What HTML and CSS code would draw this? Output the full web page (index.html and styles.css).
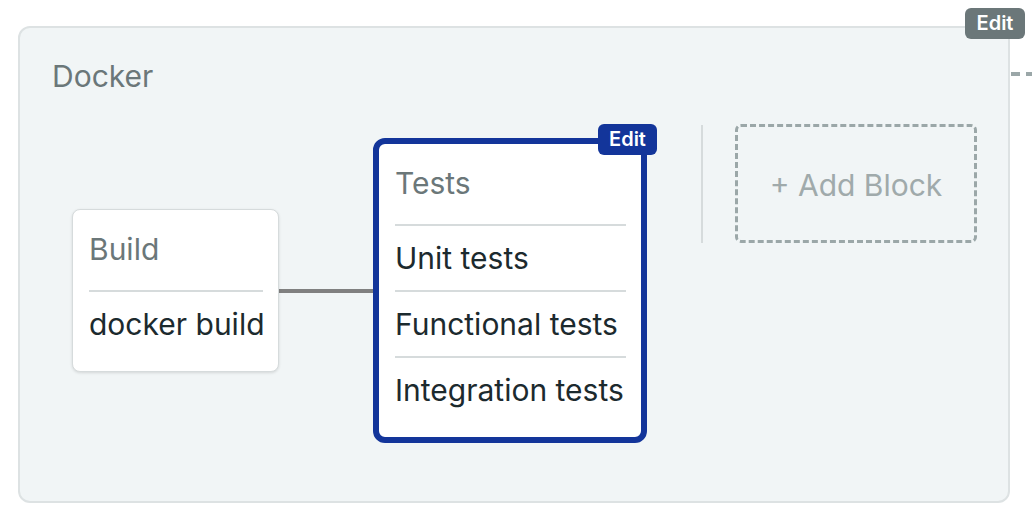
FILE: index.html
```html
<!DOCTYPE html>
<html lang="en">
<head>
    <meta charset="UTF-8">
    <meta name="viewport" content="width=device-width, initial-scale=1.0">
    <title>Workflow</title>
    <link rel="stylesheet" href="styles.css">
</head>
<body>
    <div class="workflow">
        <section class="panel">
            <span class="edit">Edit</span>
            <h1 class="panel-title">Docker</h1>
            <div class="stage">
                <div class="pipeline">
                    <div class="block build">
                        <div class="block-title">Build</div>
                        <div class="job">docker build</div>
                    </div>
                    <div class="link"></div>
                    <div class="block tests selected">
                        <span class="edit edit-blue">Edit</span>
                        <div class="block-title">Tests</div>
                        <div class="job">Unit tests</div>
                        <div class="job">Functional tests</div>
                        <div class="job">Integration tests</div>
                    </div>
                </div>
                <div class="sep"></div>
                <div class="add-block">+ Add Block</div>
            </div>
        </section>
        <div class="next"></div>
    </div>
</body>
</html>
```

FILE: styles.css
```css
*{
    box-sizing: border-box;
}
body{
    margin: 0;
    background: #ffffff;
    font-family: Inter, 'Noto Sans', sans-serif;
    overflow: hidden;
}
.workflow{
    display: flex;
    align-items: flex-start;
    padding: 26px 0 0 18px;
}
.panel{
    position: relative;
    flex: none;
    width: 992px;
    background: #f1f5f6;
    border: 2px solid #dde2e3;
    border-radius: 12px;
    padding: 30px 0 58px 32px;
}
.panel-title{
    margin: 0;
    font-size: 30px;
    line-height: 36px;
    font-weight: 400;
    color: #6b7779;
}
.edit{
    position: absolute;
    top: -20px;
    right: -17px;
    height: 31px;
    width: 60px;
    border-radius: 6px;
    background: #6b7779;
    color: #ffffff;
    font-size: 20px;
    font-weight: 600;
    line-height: 31px;
    text-align: center;
}
.edit-blue{
    right: -16px;
    width: 59px;
    background: #13359a;
}
.next{
    flex: none;
    width: 30px;
    height: 4px;
    margin: 46px 0 0 1px;
    background: repeating-linear-gradient(90deg, #9ba7a8 0 9px, transparent 9px 15px);
}
.stage{
    display: flex;
    align-items: flex-start;
    margin: 30px 0 0 20px;
}
.pipeline{
    display: flex;
    align-items: center;
    margin-top: 14px;
}
.block{
    position: relative;
    background: #ffffff;
    border: 1px solid #d6dbdc;
    border-radius: 8px;
    padding: 21px 15px 15px 16px;
    box-shadow: 0 1px 3px rgba(0, 0, 0, 0.12);
}
.build{
    width: 207px;
}
.tests{
    width: 274px;
}
.selected{
    border: 6px solid #13359a;
    border-radius: 12px;
    box-shadow: none;
}
.block-title{
    font-size: 30px;
    line-height: 36px;
    color: #6b7779;
    margin-bottom: 23px;
    white-space: nowrap;
}
.job{
    border-top: 2px solid #d6dbdc;
    padding: 14px 0;
    font-size: 30px;
    line-height: 36px;
    color: #1c2a2e;
    white-space: nowrap;
}
.link{
    width: 94px;
    height: 4px;
    background: #808080;
}
.sep{
    width: 2px;
    height: 118px;
    margin: 1px 0 0 54px;
    background: #d6dbdc;
}
.add-block{
    display: flex;
    align-items: center;
    justify-content: center;
    width: 242px;
    height: 119px;
    margin-left: 32px;
    border: 3px dashed #9ba7a8;
    border-radius: 6px;
    font-size: 30px;
    color: #a0aaab;
    padding-top: 2px;
}
```
